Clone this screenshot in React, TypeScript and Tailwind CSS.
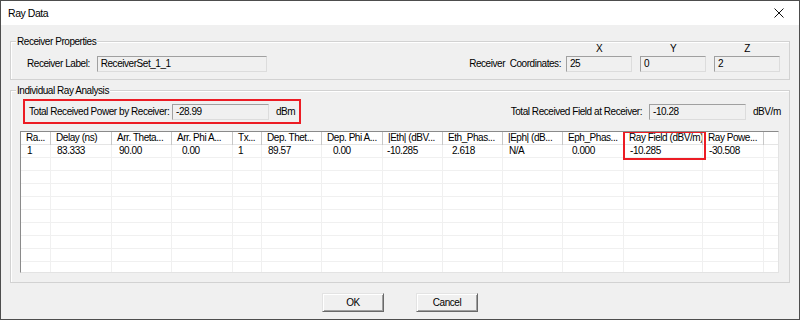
import React from "react";

const cols = [
  { h: "Ra...", v: "1", p: "pl-[6px]" },
  { h: "Delay (ns)", v: "83.333", p: "pl-[6px]" },
  { h: "Arr. Theta...", v: "90.00", p: "pl-[7px]" },
  { h: "Arr. Phi A...", v: "0.00", p: "pl-[10px]" },
  { h: "Tx...", v: "1", p: "pl-[5px]" },
  { h: "Dep. Thet...", v: "89.57", p: "pl-[6px]" },
  { h: "Dep. Phi A...", v: "0.00", p: "pl-[11px]" },
  { h: "|Eth| (dBV...", v: "-10.285", p: "pl-[4px]" },
  { h: "Eth_Phas...", v: "2.618", p: "pl-[9px]" },
  { h: "|Eph| (dB...", v: "N/A", p: "pl-[6px]" },
  { h: "Eph_Phas...", v: "0.000", p: "pl-[9px]" },
  { h: "Ray Field (dBV/m)", v: "-10.285", p: "pl-[6px]" },
  { h: "Ray Powe...", v: "-30.508", p: "pl-[6px]" },
  { h: "", v: "", p: "pl-[6px]" },
];

const grid =
  "grid grid-cols-[30px_61px_60px_61px_29px_60px_61px_60px_60px_60px_61px_79px_61px_1fr]";

function Field({ value, w }: { value: string; w: string }) {
  return (
    <div
      className={`${w} h-[16px] border border-t-[#a0a0a0] border-l-[#a0a0a0] border-b-[#dcdcdc] border-r-[#dcdcdc] bg-[#f0f0f0] pl-[3px] leading-[14px] text-black whitespace-nowrap overflow-hidden`}
    >
      {value}
    </div>
  );
}

function Button({ label }: { label: string }) {
  return (
    <div className="w-[62px] h-[19px] border border-t-[#e3e3e3] border-l-[#e3e3e3] border-b-[#696969] border-r-[#696969] bg-[#f0f0f0] shadow-[inset_1px_1px_0_#ffffff,inset_-1px_-1px_0_#a0a0a0] flex items-center justify-center leading-[17px]">
      {label}
    </div>
  );
}

export default function App() {
  const rows = Array.from({ length: 10 }, (_, i) => i);
  return (
    <div className="w-[800px] h-[320px] border border-[#4d4d4d] bg-[#f0f0f0] flex flex-col overflow-hidden font-['Liberation_Sans',Arial,sans-serif] text-[10px] tracking-[-0.45px] text-black">
      {/* title bar */}
      <div className="h-[24px] bg-white flex items-center justify-between pl-[7px] pr-[15px] shrink-0">
        <span className="text-[10.5px] leading-[14px]">Ray Data</span>
        <svg width="10" height="10" viewBox="0 0 10 10" className="block">
          <path d="M0.5 0.5 L9.5 9.5 M9.5 0.5 L0.5 9.5" stroke="#111" strokeWidth="1" />
        </svg>
      </div>

      <div className="flex-1 px-[9px] flex flex-col">
        {/* Receiver Properties */}
        <div className="relative mt-[16px] border border-[#d2d2d2] shadow-[inset_1px_1px_0_#ffffff] pl-[16px] pr-[9px] pb-[7px] flex items-end justify-between">
          <span className="absolute left-[5px] top-[-7px] bg-[#f0f0f0] px-[1px] leading-[13px]">
            Receiver Properties
          </span>
          <div className="flex items-center gap-[7px]">
            <span className="leading-[16px]">Receiver Label:</span>
            <Field value="ReceiverSet_1_1" w="w-[170px]" />
          </div>
          <div className="flex items-end">
            <span className="leading-[16px] mr-[5px] whitespace-pre">Receiver  Coordinates:</span>
            <div className="flex gap-[8px]">
              {[
                ["X", "25"],
                ["Y", "0"],
                ["Z", "2"],
              ].map(([l, v]) => (
                <div key={l} className="flex flex-col items-center">
                  <span className="h-[12px] leading-[12px] mb-[1px] mt-[1px]">{l}</span>
                  <Field value={v} w="w-[66px]" />
                </div>
              ))}
            </div>
          </div>
        </div>

        {/* Individual Ray Analysis */}
        <div className="relative mt-[10px] border border-[#d2d2d2] shadow-[inset_1px_1px_0_#ffffff] pb-[9px] flex flex-col">
          <span className="absolute left-[5px] top-[-7px] bg-[#f0f0f0] px-[1px] leading-[13px]">
            Individual Ray Analysis
          </span>
          <div className="flex items-center justify-between pt-[8px] pl-[12px]">
            <div className="h-[25px] border-2 border-[#ec1c24] flex items-center pl-[4px] pr-[4px]">
              <span className="leading-[16px] w-[143px] whitespace-nowrap">Total Received Power by Receiver:</span>
              <Field value="-28.99" w="w-[97px]" />
              <span className="ml-[7px] leading-[16px]">dBm</span>
            </div>
            <div className="flex items-center">
              <span className="leading-[16px] whitespace-nowrap mr-[7px]">Total Received Field at Receiver:</span>
              <Field value="-10.28" w="w-[97px]" />
              <span className="ml-[7px] w-[36px] leading-[16px]">dBV/m</span>
            </div>
          </div>

          {/* table */}
          <div className="relative mt-[7px] ml-[9px] mr-[10px] h-[142px] border border-t-[#8a8a8a] border-l-[#8a8a8a] border-b-[#e3e3e3] border-r-[#e3e3e3] bg-white overflow-hidden">
            <div className={`${grid} h-[13px] border-b border-[#e5e5e5]`}>
              {cols.map((c, i) => (
                <div
                  key={i}
                  className={`h-[13px] leading-[12px] pl-[5px] whitespace-nowrap overflow-hidden ${
                    i < cols.length - 1 ? "border-r border-[#c8c8c8]" : ""
                  }`}
                >
                  {c.h}
                </div>
              ))}
            </div>
            {rows.map((r) => (
              <div key={r} className={`${grid} h-[13px]`}>
                {cols.map((c, i) => (
                  <div
                    key={i}
                    className={`h-[13px] leading-[12px] ${c.p} whitespace-nowrap overflow-hidden border-b border-[#f0f0f0] ${
                      i < cols.length - 1 ? "border-r" : ""
                    }`}
                  >
                    {r === 0 ? c.v : ""}
                  </div>
                ))}
              </div>
            ))}
            <div className="absolute left-[602px] top-[-1px] w-[83px] h-[29px] border-2 border-[#ec1c24]" />
          </div>
        </div>

        {/* buttons */}
        <div className="flex justify-center gap-[32px] mt-[10px]">
          <Button label="OK" />
          <Button label="Cancel" />
        </div>
      </div>
    </div>
  );
}
